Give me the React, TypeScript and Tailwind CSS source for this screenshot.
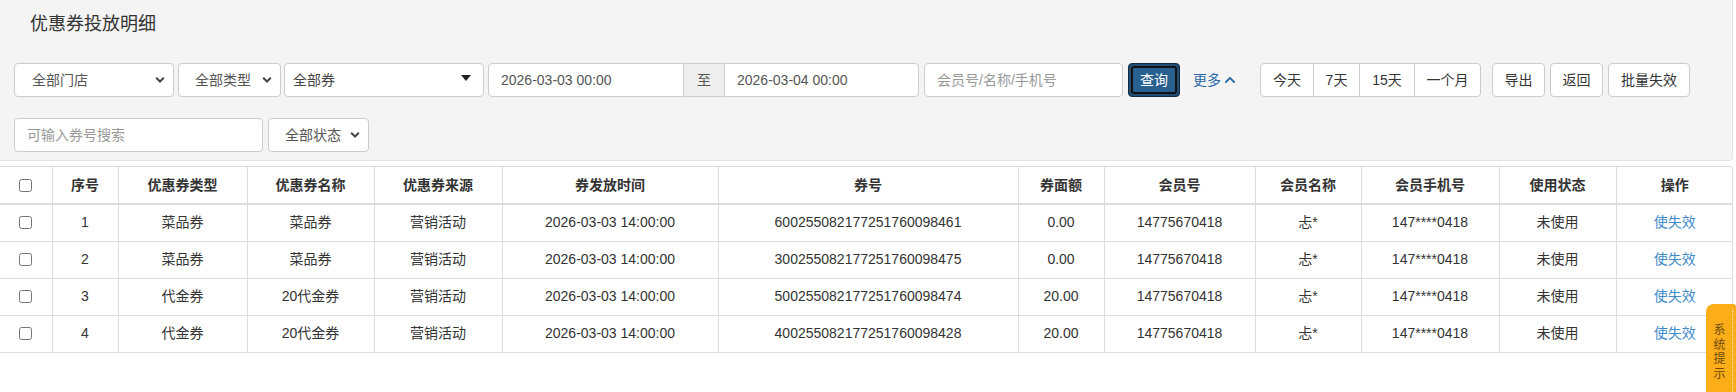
import React from "react";
import { FaChevronUp } from "react-icons/fa";

const Chevron = () => (
  <svg width="10" height="7" viewBox="0 0 10 7" className="absolute right-[8px] top-1/2 -translate-y-1/2">
    <path d="M1.2 1.3 L5 5 L8.8 1.3" fill="none" stroke="#444" strokeWidth="2" />
  </svg>
);

function Sel({ cls, label, textCls }: { cls: string; label: string; textCls: string }) {
  return (
    <div className={`relative h-[34px] bg-white border border-[#ccc] rounded-[4px] flex items-center text-[14px] text-[#555] ${cls}`}>
      <span className={textCls}>{label}</span>
      <Chevron />
    </div>
  );
}

const rows = [
  { n: 1, type: "菜品券", name: "菜品券", no: "600255082177251760098461", amt: "0.00" },
  { n: 2, type: "菜品券", name: "菜品券", no: "300255082177251760098475", amt: "0.00" },
  { n: 3, type: "代金券", name: "20代金券", no: "500255082177251760098474", amt: "20.00" },
  { n: 4, type: "代金券", name: "20代金券", no: "400255082177251760098428", amt: "20.00" },
];

const heads = ["序号", "优惠券类型", "优惠券名称", "优惠券来源", "券发放时间", "券号", "券面额", "会员号", "会员名称", "会员手机号", "使用状态", "操作"];
const widths = [52, 66, 129, 127, 128, 216, 300, 86, 151, 106, 138, 117, 117];

export default function App() {
  return (
    <div className="relative w-[1736px] h-[392px] bg-white overflow-hidden font-['Liberation_Sans','Noto_Sans_CJK_SC',sans-serif] text-[#333]">
      {/* filter panel */}
      <div className="w-[1733px] h-[161px] bg-[#f4f4f4] border-r border-b border-[#e2e2e2] rounded-br-[4px]">
        <div className="pl-[30px] pt-[11px] h-[63px] text-[18px] leading-[26px] text-[#333]">优惠券投放明细</div>
        <div className="flex items-center pl-[14px] h-[34px]">
          <Sel cls="w-[160px]" label="全部门店" textCls="pl-[17px]" />
          <Sel cls="w-[103px] ml-[4px]" label="全部类型" textCls="pl-[16px]" />
          <div className="relative ml-[3px] w-[200px] h-[34px] bg-white border border-[#ccc] rounded-[4px] flex items-center text-[14px] text-[#444]">
            <span className="pl-[8px]">全部券</span>
            <svg width="10" height="6" viewBox="0 0 10 6" className="absolute right-[12px] top-[11px]">
              <path d="M0 0 L10 0 L5 6 Z" fill="#222" />
            </svg>
          </div>
          <div className="ml-[4px] flex h-[34px] text-[14px]">
            <div className="w-[196px] bg-white border border-[#ccc] rounded-l-[4px] flex items-center pl-[12px] text-[#555]">2026-03-03 00:00</div>
            <div className="w-[40px] bg-[#eee] border-y border-[#ccc] flex items-center justify-center text-[#555]">至</div>
            <div className="w-[195px] bg-white border border-[#ccc] rounded-r-[4px] flex items-center pl-[12px] text-[#555]">2026-03-04 00:00</div>
          </div>
          <div className="ml-[5px] w-[199px] h-[34px] bg-white border border-[#ccc] rounded-[4px] flex items-center pl-[12px] text-[14px] text-[#999]">会员号/名称/手机号</div>
          <div className="ml-[5px] w-[52px] h-[34px] bg-[#204d74] border border-[#122b40] rounded-[4px] p-[2px]">
            <div className="w-full h-full rounded-[3px] border-2 border-[#111] bg-[#286090] flex items-center justify-center text-white text-[14px]">查询</div>
          </div>
          <div className="ml-[13px] flex items-center gap-[3px] text-[14px] text-[#2a6aa6]">
            <span>更多</span>
            <FaChevronUp size={12} />
          </div>
          <div className="ml-[24px] flex h-[34px] text-[14px] text-[#333] bg-white border border-[#ccc] rounded-[4px]">
            <div className="w-[52px] flex items-center justify-center">今天</div>
            <div className="w-[46px] flex items-center justify-center border-l border-[#ccc]">7天</div>
            <div className="w-[55px] flex items-center justify-center border-l border-[#ccc]">15天</div>
            <div className="w-[66px] flex items-center justify-center border-l border-[#ccc]">一个月</div>
          </div>
          <div className="ml-[11px] w-[53px] h-[34px] bg-white border border-[#ccc] rounded-[4px] flex items-center justify-center text-[14px]">导出</div>
          <div className="ml-[5px] w-[53px] h-[34px] bg-white border border-[#ccc] rounded-[4px] flex items-center justify-center text-[14px]">返回</div>
          <div className="ml-[5px] w-[82px] h-[34px] bg-white border border-[#ccc] rounded-[4px] flex items-center justify-center text-[14px]">批量失效</div>
        </div>
        <div className="flex items-center pl-[14px] mt-[21px] h-[34px]">
          <div className="w-[249px] h-[34px] bg-white border border-[#ccc] rounded-[4px] flex items-center pl-[12px] text-[14px] text-[#999]">可输入券号搜索</div>
          <Sel cls="w-[101px] ml-[5px]" label="全部状态" textCls="pl-[16px]" />
        </div>
      </div>

      {/* table */}
      <div className="mt-[5px] w-[1733px] border-t border-r border-[#ddd] rounded-tr-[4px] overflow-hidden">
        <table className="table-fixed border-collapse w-[1733px] text-[14px] text-[#333]">
          <colgroup>
            {widths.map((w, i) => (
              <col key={i} style={{ width: w }} />
            ))}
          </colgroup>
          <thead>
            <tr className="h-[37px]">
              <th className="border-r border-b-2 border-[#ddd] p-0 align-middle">
                <div className="flex items-center justify-center">
                  <input type="checkbox" className="w-[13px] h-[13px] m-0" />
                </div>
              </th>
              {heads.map((h, i) => (
                <th key={h} className={`border-b-2 border-[#ddd] font-bold p-0 text-center align-middle ${i < heads.length - 1 ? "border-r" : ""}`}>
                  {h}
                </th>
              ))}
            </tr>
          </thead>
          <tbody>
            {rows.map((r) => {
              const cells = [String(r.n), r.type, r.name, "营销活动", "2026-03-03 14:00:00", r.no, r.amt, "14775670418", "忐*", "147****0418", "未使用"];
              return (
                <tr key={r.n} className="h-[37px]">
                  <td className="border-r border-b border-[#ddd] p-0 align-middle">
                    <div className="flex items-center justify-center">
                      <input type="checkbox" className="w-[13px] h-[13px] m-0" />
                    </div>
                  </td>
                  {cells.map((c, i) => (
                    <td key={i} className="border-r border-b border-[#ddd] p-0 text-center align-middle">
                      {c}
                    </td>
                  ))}
                  <td className="border-b border-[#ddd] p-0 text-center align-middle text-[#428bca]">使失效</td>
                </tr>
              );
            })}
          </tbody>
        </table>
      </div>

      {/* system tip tab */}
      <div className="absolute left-[1706px] top-[304px] w-[30px] h-[88px] bg-[#fcad17] rounded-tl-[8px] rounded-tr-[3px]">
        <div className="absolute right-[3px] top-[5px] bottom-0 border-r border-dotted border-white/80" />
        <div className="flex flex-col items-center pt-[19px] pr-[3px] text-[12px] leading-[14.5px] text-[#6b4a10]">
          <span>系</span>
          <span>统</span>
          <span>提</span>
          <span>示</span>
        </div>
      </div>
    </div>
  );
}
